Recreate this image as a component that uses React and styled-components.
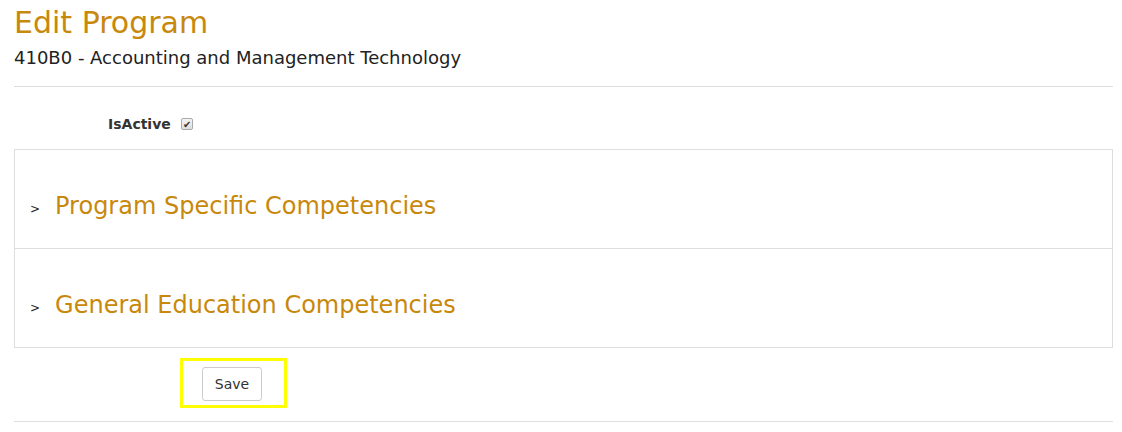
import React from 'react'
import styled, { createGlobalStyle } from 'styled-components'

const gold = '#c8880c'

const GlobalStyle = createGlobalStyle`
  body {
    margin: 0;
    background: #fff;
    font-family: 'DejaVu Sans', Verdana, sans-serif;
    color: #222;
  }
`

const Page = styled.div`
  padding: 0 9px 0 14px;
`

const Title = styled.h1`
  margin: 5px 0 0;
  font-size: 30px;
  line-height: 36px;
  font-weight: 400;
  color: ${gold};
`

const Subtitle = styled.h4`
  margin: 5px 0 0;
  font-size: 18px;
  line-height: 24px;
  font-weight: 400;
  color: #222;
`

const Rule = styled.hr`
  margin: ${p => p.$top || 0}px 0 0;
  border: 0;
  border-top: 1px solid #ddd;
`

const FieldRow = styled.div`
  display: flex;
  align-items: center;
  gap: 10px;
  padding-left: 94px;
  margin-top: 28px;
  height: 18px;
`

const Label = styled.label`
  font-size: 14px;
  font-weight: 700;
  color: #333;
`

const Check = styled.input`
  appearance: none;
  margin: 0;
  width: 12px;
  height: 12px;
  border: 1px solid #aaa;
  border-radius: 2px;
  background: linear-gradient(#f4f4f4, #dedede);
  position: relative;
  &:checked::after {
    content: '✔';
    position: absolute;
    inset: 0;
    font-size: 10px;
    line-height: 11px;
    text-align: center;
    color: #333;
  }
`

const Panel = styled.div`
  margin-top: 16px;
  border: 1px solid #ddd;
`

const Section = styled.div`
  display: flex;
  align-items: center;
  height: 85px;
  padding: 13px 0 0 15px;
  gap: 15px;
  & + & {
    border-top: 1px solid #ddd;
  }
`

const Chevron = styled.span`
  font-size: 12px;
  color: #222;
  padding-top: 6px;
`

const SectionTitle = styled.h3`
  margin: 0;
  font-size: 24px;
  font-weight: 400;
  color: ${gold};
`

const Actions = styled.div`
  display: flex;
  padding-left: 166px;
  margin-top: 10px;
`

const Focus = styled.div`
  border: 3px solid #ffff00;
  padding: 6px 22px 4px 19px;
`

const Button = styled.button`
  font-family: 'DejaVu Sans', Verdana, sans-serif;
  font-size: 14px;
  color: #333;
  background: #fff;
  border: 1px solid #ccc;
  border-radius: 3px;
  width: 60px;
  height: 34px;
  padding: 0;
`

export default function App() {
  return (
    <Page>
      <GlobalStyle />
      <Title>Edit Program</Title>
      <Subtitle>410B0 - Accounting and Management Technology</Subtitle>
      <Rule $top={16} />
      <FieldRow>
        <Label htmlFor="isactive">IsActive</Label>
        <Check id="isactive" type="checkbox" defaultChecked />
      </FieldRow>
      <Panel>
        <Section>
          <Chevron>&gt;</Chevron>
          <SectionTitle>Program Specific Competencies</SectionTitle>
        </Section>
        <Section>
          <Chevron>&gt;</Chevron>
          <SectionTitle>General Education Competencies</SectionTitle>
        </Section>
      </Panel>
      <Actions>
        <Focus>
          <Button>Save</Button>
        </Focus>
      </Actions>
      <Rule $top={13} />
    </Page>
  )
}
